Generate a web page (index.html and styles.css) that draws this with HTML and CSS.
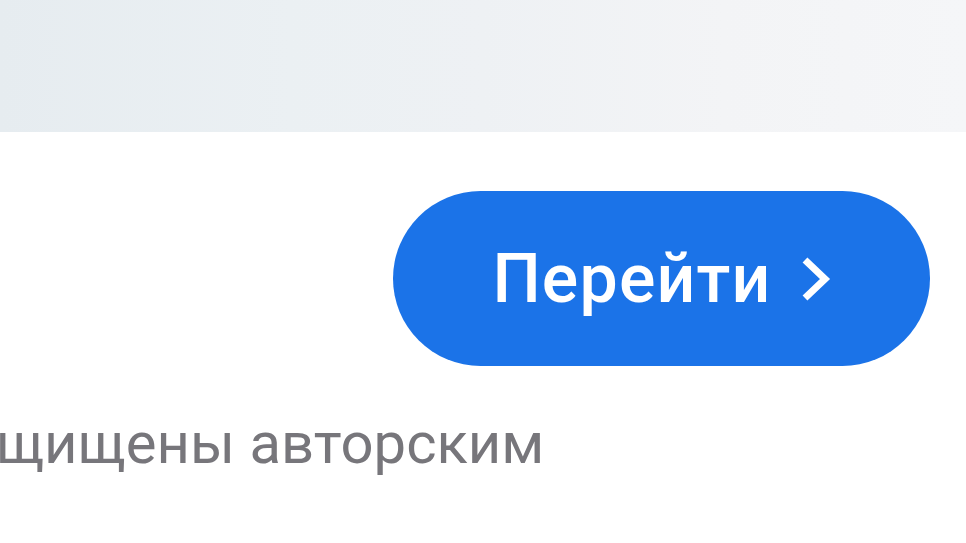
FILE: index.html
```html
<!DOCTYPE html>
<html lang="ru">
<head>
<meta charset="utf-8">
<link rel="stylesheet" href="styles.css">
</head>
<body>
<div class="hero"></div>
<div class="actions">
  <a class="go-btn" href="#">
    <span class="go-label">Перейти</span>
    <svg class="chev" width="30" height="44" viewBox="0 0 30 44" aria-hidden="true">
      <path d="M4 3 L24 22 L4 41" fill="none" stroke="#fff" stroke-width="7"/>
    </svg>
  </a>
</div>
<p class="notice">щищены авторским</p>
</body>
</html>
```

FILE: styles.css
```css
html, body {
  margin: 0;
  padding: 0;
  background: #fff;
}
body {
  width: 966px;
  height: 543px;
  overflow: hidden;
  font-family: Roboto, "Noto Sans", sans-serif;
}
.hero {
  height: 132px;
  background: linear-gradient(90deg, #e6ecf0 0%, #ebf0f3 30%, #eef1f4 50%, #f3f4f6 75%, #f5f6f8 100%);
}
.actions {
  display: flex;
  justify-content: flex-end;
  padding: 59px 36px 0 0;
}
.go-btn {
  width: 537px;
  height: 175px;
  border-radius: 88px;
  background: #1b73e8;
  display: flex;
  align-items: center;
  justify-content: center;
  gap: 29px;
  text-decoration: none;
  color: #fff;
}
.go-label {
  font-family: Roboto, sans-serif;
  font-weight: 500;
  font-size: 68px;
  letter-spacing: 1.2px;
  line-height: 1;
}
.chev {
  display: block;
}
.notice {
  margin: 43px 0 0 -4px;
  font-family: Roboto, sans-serif;
  font-size: 58px;
  line-height: 68px;
  color: #77767b;
  white-space: nowrap;
}
```
